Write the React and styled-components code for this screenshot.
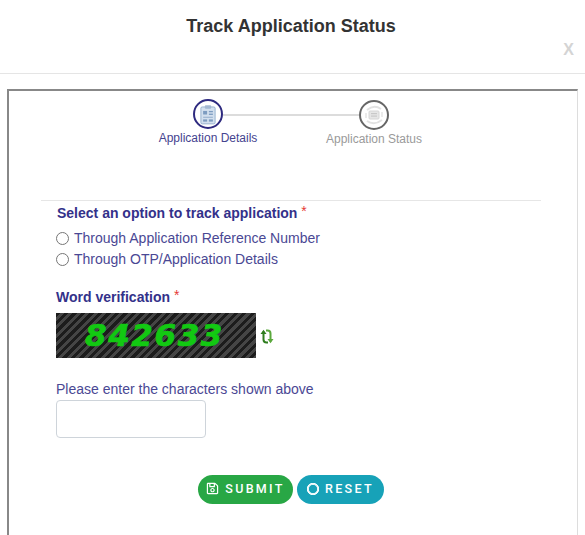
import React from 'react';
import styled, { createGlobalStyle } from 'styled-components';
import { FaRegSave, FaRegCircle } from 'react-icons/fa';

const GlobalStyle = createGlobalStyle`
	html, body {
		margin: 0;
		padding: 0;
		background: #fff;
		overflow: hidden;
		font-family: "Liberation Sans", Arial, sans-serif;
	}
`;

const ClipboardIcon = () => (
	<svg width='16' height='21' viewBox='0 0 18 22'>
		<rect x='1' y='2.5' width='16' height='19' rx='1.5' fill='#d3e0ee' stroke='#8fabcb' />
		<rect x='5.5' y='0.5' width='7' height='4' rx='1' fill='#a3b8d2' />
		<rect x='3.5' y='7' width='4.5' height='4' fill='#7d9cc0' />
		<rect x='10' y='7' width='4.5' height='1.5' fill='#7d9cc0' />
		<rect x='10' y='10' width='4.5' height='1.5' fill='#7d9cc0' />
		<rect x='3.5' y='13.5' width='11' height='1.3' fill='#9db5d1' />
		<rect x='3.5' y='16.5' width='4.5' height='2.5' fill='#7d9cc0' />
		<rect x='10' y='16.5' width='4.5' height='2.5' fill='#7d9cc0' />
	</svg>
);

const StatusIcon = () => (
	<svg width='24' height='24' viewBox='0 0 24 24'>
		<path d='M5 7 Q12 1 19 6' fill='none' stroke='#e2e2e2' strokeWidth='2' />
		<path d='M5 18 Q12 23 20 17' fill='none' stroke='#e2e2e2' strokeWidth='2' />
		<rect x='7' y='8' width='10' height='8' rx='1' fill='#e6e6e6' stroke='#d6d6d6' />
		<rect x='9' y='10' width='6' height='1.2' fill='#c8c8c8' />
		<rect x='9' y='12.5' width='6' height='1.2' fill='#c8c8c8' />
		<path d='M4 10v5M20 9v5' stroke='#e6e6e6' strokeWidth='1.6' />
	</svg>
);

const RefreshIcon = () => (
	<svg width='14' height='17' viewBox='0 0 14 17'>
		<path d='M3.5 3.5V11.5Q3.5 14.5 6.5 14.5H8' fill='none' stroke='#2f7d1e' strokeWidth='2' />
		<path d='M0.5 6 3.5 1.8 6.5 6Z' fill='#2f7d1e' />
		<path d='M10.5 13.5V5.5Q10.5 2.5 7.5 2.5H6' fill='none' stroke='#5aa83c' strokeWidth='2' />
		<path d='M7.5 11 10.5 15.2 13.5 11Z' fill='#5aa83c' />
	</svg>
);

const App = () => {
	return (
		<Page>
			<GlobalStyle />
			<Header>
				<Title>Track Application Status</Title>
				<Close>X</Close>
			</Header>
			<Frame>
				<Stepper>
					<Step>
						<StepCircle $active>
							<ClipboardIcon />
						</StepCircle>
						<StepLabel $active>Application Details</StepLabel>
					</Step>
					<StepLine />
					<Step $lower>
						<StepCircle>
							<StatusIcon />
						</StepCircle>
						<StepLabel>Application Status</StepLabel>
					</Step>
				</Stepper>
				<Divider />
				<Form>
					<FieldLabel>
						Select an option to track application <Required>*</Required>
					</FieldLabel>
					<RadioList>
						<RadioRow>
							<Radio type='radio' name='track' />
							Through Application Reference Number
						</RadioRow>
						<RadioRow>
							<Radio type='radio' name='track' />
							Through OTP/Application Details
						</RadioRow>
					</RadioList>
					<WordLabel>
						Word verification <Required>*</Required>
					</WordLabel>
					<CaptchaRow>
						<Captcha>842633</Captcha>
						<RefreshButton>
							<RefreshIcon />
						</RefreshButton>
					</CaptchaRow>
					<Hint>Please enter the characters shown above</Hint>
					<CodeInput type='text' />
					<Buttons>
						<PillButton $color='#28a745' $width={95}>
							<FaRegSave size={13} />
							SUBMIT
						</PillButton>
						<PillButton $color='#17a2b8' $width={87}>
							<ResetRing size={12} />
							RESET
						</PillButton>
					</Buttons>
				</Form>
			</Frame>
		</Page>
	);
};

export default App;

const Page = styled.div`
	width: 585px;
	height: 535px;
	overflow: hidden;
	background: #fff;
`;

const Header = styled.header`
	height: 74px;
	box-sizing: border-box;
	border-bottom: 1px solid #e5e5e5;
	display: flex;
	flex-direction: column;
	padding: 16px 11px 0 0;
`;

const Title = styled.h4`
	margin: 0 0 0 8px;
	text-align: center;
	font-size: 18px;
	line-height: 21px;
	font-weight: 700;
	color: #333;
`;

const Close = styled.span`
	align-self: flex-end;
	margin-top: 4px;
	font-size: 16px;
	line-height: 18px;
	font-weight: 700;
	color: #d4d4d4;
`;

const Frame = styled.section`
	margin: 15px 0 0 7px;
	width: 571px;
	height: 460px;
	box-sizing: border-box;
	border-top: 2px solid #888;
	border-left: 2px solid #888;
	border-right: 1px solid #ddd;
`;

const Stepper = styled.div`
	display: flex;
	align-items: flex-start;
	padding: 8px 0 0 184px;
	height: 109px;
	box-sizing: border-box;
`;

const Step = styled.div`
	width: 30px;
	display: flex;
	flex-direction: column;
	align-items: center;
	flex: none;
	padding-top: ${(p) => (p.$lower ? '1px' : '0')};
`;

const StepCircle = styled.div`
	width: 30px;
	height: 30px;
	box-sizing: border-box;
	border-radius: 50%;
	background: #fff;
	border: 2px solid ${(p) => (p.$active ? '#2e2a7f' : '#666')};
	display: flex;
	align-items: center;
	justify-content: center;
`;

const StepLabel = styled.span`
	margin-top: 2px;
	font-size: 12px;
	line-height: 14px;
	white-space: nowrap;
	color: ${(p) => (p.$active ? '#45438f' : '#9a9a9a')};
`;

const StepLine = styled.div`
	flex: none;
	width: 136px;
	height: 2px;
	margin-top: 15px;
	background: #dcdcdc;
`;

const Divider = styled.hr`
	margin: 0 0 0 32px;
	width: 500px;
	border: 0;
	border-top: 1px solid #e6e6e6;
`;

const Form = styled.form`
	padding: 2px 0 0 47px;
	display: flex;
	flex-direction: column;
	align-items: flex-start;
`;

const FieldLabel = styled.label`
	margin-left: 1px;
	font-size: 14px;
	line-height: 16px;
	font-weight: 700;
	color: #33318a;
`;

const Required = styled.span`
	color: #e53935;
	font-weight: 400;
	vertical-align: 2px;
`;

const RadioList = styled.div`
	margin-top: 9px;
	display: flex;
	flex-direction: column;
	gap: 5px;
`;

const RadioRow = styled.label`
	display: flex;
	align-items: center;
	gap: 5px;
	font-size: 14px;
	line-height: 16px;
	color: #4a4894;
`;

const Radio = styled.input`
	margin: 0;
	width: 13px;
	height: 13px;
`;

const WordLabel = styled(FieldLabel)`
	margin: 20px 0 0;
`;

const CaptchaRow = styled.div`
	margin-top: 8px;
	display: flex;
	align-items: center;
	gap: 4px;
`;

const Captcha = styled.div`
	width: 200px;
	height: 45px;
	box-sizing: border-box;
	padding-left: 29px;
	background: repeating-linear-gradient(
		135deg,
		#1c1c1c 0,
		#1c1c1c 3px,
		#454545 3px,
		#454545 6px
	);
	font-family: "DejaVu Sans", sans-serif;
	font-size: 31px;
	line-height: 44px;
	font-weight: 700;
	font-style: italic;
	letter-spacing: 1.6px;
	-webkit-text-stroke: 0.7px #12c912;
	color: #12c912;
`;

const RefreshButton = styled.span`
	display: flex;
	margin-top: 1px;
`;

const Hint = styled.p`
	margin: 23px 0 0;
	font-size: 14px;
	line-height: 16px;
	color: #4a4894;
`;

const CodeInput = styled.input`
	margin-top: 3px;
	width: 150px;
	height: 38px;
	box-sizing: border-box;
	border: 1px solid #ced4da;
	border-radius: 4px;
	background: #fff;
`;

const Buttons = styled.div`
	margin: 37px 0 0 142px;
	display: flex;
	gap: 4px;
`;

const PillButton = styled.button`
	width: ${(p) => p.$width}px;
	height: 29px;
	padding: 0 0 2px;
	border: 0;
	border-radius: 15px;
	background: ${(p) => p.$color};
	color: #fff;
	display: flex;
	align-items: center;
	justify-content: center;
	gap: 6px;
	font-family: Roboto, "Liberation Sans", sans-serif;
	font-size: 12.5px;
	font-weight: 500;
	letter-spacing: 2.3px;
`;

const ResetRing = styled(FaRegCircle)`
	stroke: currentColor;
	stroke-width: 40;
`;
